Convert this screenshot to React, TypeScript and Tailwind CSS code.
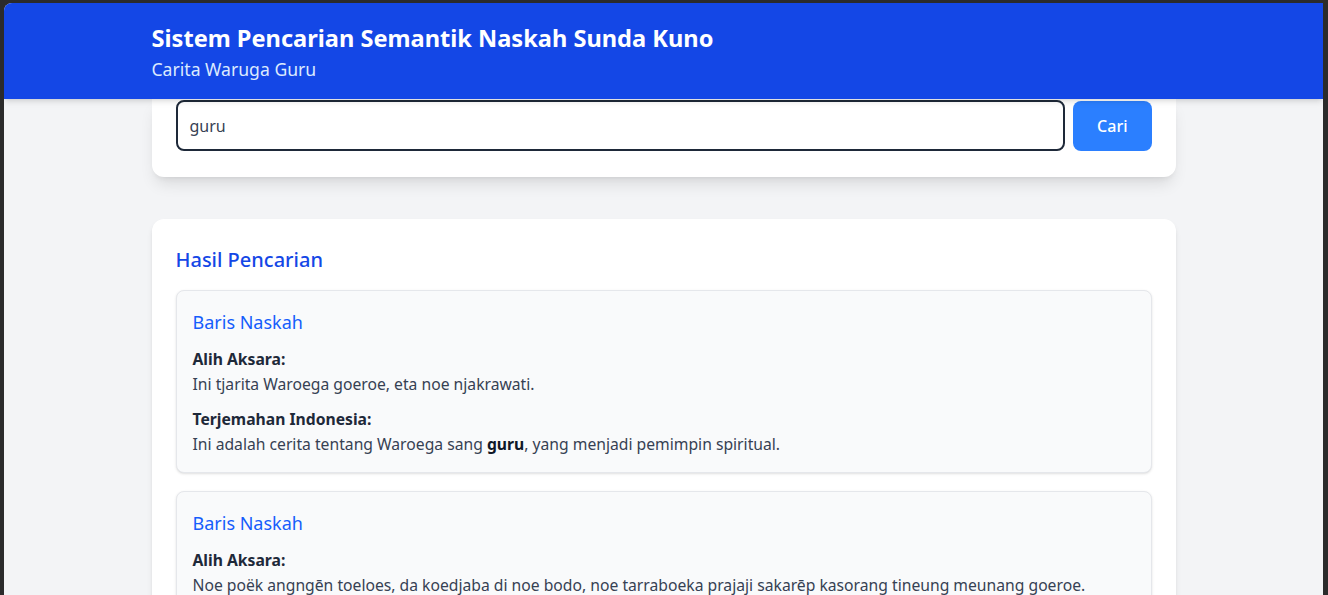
const results: { id: number; latin: string; translation?: string[] }[] = [
  {
    id: 1,
    latin: 'Ini tjarita Waroega goeroe, eta noe njakrawati.',
    translation: ['Ini adalah cerita tentang Waroega sang ', 'guru', ', yang menjadi pemimpin spiritual.'],
  },
  {
    id: 2,
    latin: 'Noe poëk angngēn toeloes, da koedjaba di noe bodo, noe tarraboeka prajaji sakarēp kasorang tineung meunang goeroe.',
  },
];

export default function App() {
  return (
    <div
      className="h-[595px] overflow-hidden bg-[#2b2b2b] pt-[3px] pl-[4px] pr-[5px]"
      style={{ fontFamily: '"Noto Sans", "Open Sans", sans-serif' }}
    >
      <div className="h-full overflow-hidden rounded-tl-lg bg-gray-100">
        <header className="relative z-10 bg-blue-700 text-white shadow-md">
          <div className="mx-auto max-w-5xl pt-[19px] pb-4">
            <h1 className="text-[23.6px] leading-8 font-bold">Sistem Pencarian Semantik Naskah Sunda Kuno</h1>
            <p className="mt-px text-[17.6px] leading-7 text-blue-100">Carita Waruga Guru</p>
          </div>
        </header>

        <main className="mx-auto max-w-5xl">
          <div className="flex gap-2 rounded-b-xl bg-white px-6 pt-px pb-[26px] shadow-lg">
            <div className="flex h-[51px] flex-1 items-center rounded-lg border-2 border-gray-800 px-3 text-base text-gray-700">
              guru
            </div>
            <button className="mt-px h-[50px] rounded-lg bg-blue-500 px-6 font-medium text-white">Cari</button>
          </div>

          <section className="mt-[42px] rounded-xl bg-white px-6 pt-[27px] pb-6 shadow-md">
            <h2 className="mb-4 text-xl font-medium text-blue-700">Hasil Pencarian</h2>
            <div className="space-y-[18px]">
              {results.map((r) => (
                <article key={r.id} className="rounded-lg border border-gray-200 bg-gray-50 px-4 pt-[17px] pb-[15px] shadow-sm">
                  <h3 className="mb-[11px] text-lg leading-7 text-blue-600">Baris Naskah</h3>
                  <div className="mb-[10px] text-[15.7px] leading-[25px] text-gray-800">
                    <p className="font-bold">Alih Aksara:</p>
                    <p className="text-gray-700">{r.latin}</p>
                  </div>
                  {r.translation && (
                    <div className="text-[15.7px] leading-[25px] text-gray-800">
                      <p className="font-bold">Terjemahan Indonesia:</p>
                      <p className="text-gray-700">
                        {r.translation[0]}
                        <strong className="text-gray-900">{r.translation[1]}</strong>
                        {r.translation[2]}
                      </p>
                    </div>
                  )}
                </article>
              ))}
            </div>
          </section>
        </main>
      </div>
    </div>
  );
}
